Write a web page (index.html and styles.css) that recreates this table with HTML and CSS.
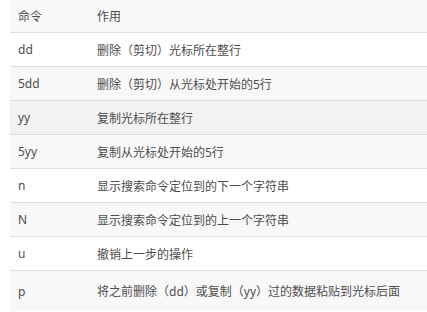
FILE: index.html
```html
<!DOCTYPE html>
<html lang="zh">
<head>
<meta charset="utf-8">
<link rel="stylesheet" href="styles.css">
</head>
<body>
<table class="cmd-table">
  <thead>
    <tr class="row-head"><th class="c1">命令</th><th class="c2">作用</th></tr>
  </thead>
  <tbody>
    <tr class="row-white"><td class="c1">dd</td><td class="c2">删除（剪切）光标所在整行</td></tr>
    <tr class="row-grey"><td class="c1">5dd</td><td class="c2">删除（剪切）从光标处开始的5行</td></tr>
    <tr class="row-hover"><td class="c1">yy</td><td class="c2">复制光标所在整行</td></tr>
    <tr class="row-grey"><td class="c1">5yy</td><td class="c2">复制从光标处开始的5行</td></tr>
    <tr class="row-white"><td class="c1">n</td><td class="c2">显示搜索命令定位到的下一个字符串</td></tr>
    <tr class="row-grey"><td class="c1">N</td><td class="c2">显示搜索命令定位到的上一个字符串</td></tr>
    <tr class="row-white"><td class="c1">u</td><td class="c2">撤销上一步的操作</td></tr>
    <tr class="row-grey row-last"><td class="c1">p</td><td class="c2">将之前删除（dd）或复制（yy）过的数据粘贴到光标后面</td></tr>
  </tbody>
</table>
</body>
</html>
```
FILE: styles.css
```css
html, body {
  margin: 0;
  padding: 0;
  background: #ffffff;
  overflow: hidden;
}
body {
  padding-left: 10px;
  width: 427px;
  height: 312px;
  box-sizing: border-box;
}
.cmd-table {
  border-collapse: collapse;
  width: 430px;
  font-family: "Noto Sans", "Noto Sans CJK SC", sans-serif;
  font-size: 12px;
  color: #4d4d4d;
}
.cmd-table th, .cmd-table td {
  text-align: left;
  font-weight: normal;
  padding: 0 8px;
  height: 33px;
  border-bottom: 1px solid #dddddd;
  white-space: nowrap;
}
.cmd-table th {
  height: 32px;
}
.c1 { width: 63px; }
.row-head { background: #f8f8f8; }
.row-white { background: #ffffff; }
.row-grey { background: #f8f8f8; }
.row-hover { background: #f2f2f2; }
.row-last td { height: 40px; border-bottom: none; }
```
